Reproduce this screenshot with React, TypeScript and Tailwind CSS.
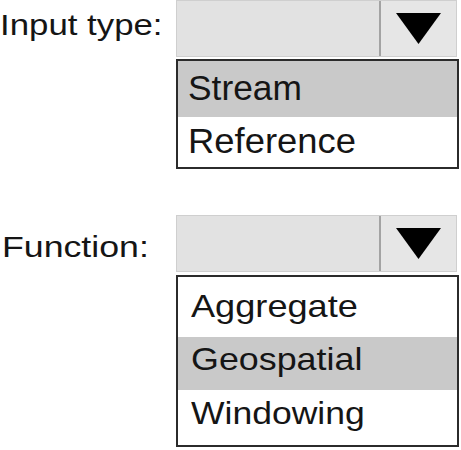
import React from "react";

function Combo() {
  return (
    <div className="flex h-[57px] w-[281px] border border-[#cfcfcf] bg-[#e2e2e2]">
      <div className="flex-1" />
      <div className="w-[2px] bg-[#a3a3a3]" />
      <div className="flex w-[75px] items-center justify-center bg-[#e6e6e6]">
        <svg width="45" height="31" viewBox="0 0 45 31">
          <polygon points="0,0 45,0 22.5,31" fill="#000" />
        </svg>
      </div>
    </div>
  );
}

export default function App() {
  return (
    <div
      className="relative h-[450px] w-[461px] overflow-hidden bg-white text-[#151515]"
      style={{ fontFamily: '"Liberation Sans", Arial, sans-serif' }}
    >
      <div className="flex">
        <div className="w-[176px]">
          <div className="mt-[10px] origin-left scale-x-[1.16] whitespace-nowrap text-[30px] leading-none">
            Input type:
          </div>
        </div>
        <div className="flex flex-col">
          <Combo />
          <div className="mt-[2px] w-[283px] border-2 border-[#2b2b2b]">
            <div className="h-[56px] bg-[#c9c9c9] pl-[10px] pt-[9px]">
              <div className="origin-left scale-x-[1.01] text-[35px] leading-none">Stream</div>
            </div>
            <div className="h-[50px] bg-white pl-[10px] pt-[6px]">
              <div className="origin-left scale-x-[1.04] text-[35px] leading-none">Reference</div>
            </div>
          </div>
        </div>
      </div>

      <div className="mt-[46px] flex">
        <div className="w-[176px]">
          <div className="ml-[2px] mt-[17px] origin-left scale-x-[1.19] whitespace-nowrap text-[30px] leading-none">
            Function:
          </div>
        </div>
        <div className="flex flex-col">
          <Combo />
          <div className="mt-[3px] w-[283px] border-2 border-[#2b2b2b]">
            <div className="h-[60px] bg-white pl-[13px] pt-[13px]">
              <div className="origin-left scale-x-[1.13] text-[32px] leading-none">Aggregate</div>
            </div>
            <div className="h-[53px] bg-[#c9c9c9] pl-[13px] pt-[6px]">
              <div className="origin-left scale-x-[1.12] text-[32px] leading-none">Geospatial</div>
            </div>
            <div className="h-[55px] bg-white pl-[13px] pt-[7px]">
              <div className="origin-left scale-x-[1.11] text-[32px] leading-none">Windowing</div>
            </div>
          </div>
        </div>
      </div>
    </div>
  );
}
